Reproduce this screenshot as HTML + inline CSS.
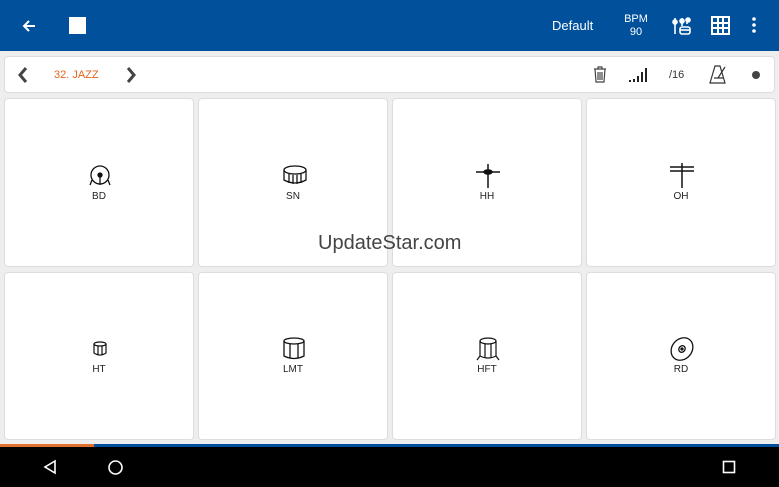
<!DOCTYPE html>
<html><head><meta charset="utf-8"><style>
*{margin:0;padding:0;box-sizing:border-box}
body{width:779px;height:487px;overflow:hidden;background:#eeeeee;font-family:"Liberation Sans",sans-serif;position:relative}
.top{position:absolute;left:0;top:0;width:779px;height:51px;background:#00509c}
.abs{position:absolute}
.bar{position:absolute;left:4px;top:56px;width:771px;height:37px;background:#fff;border:1px solid #ddd;border-radius:4px}
.cell{position:absolute;width:190px;background:#fff;border:1px solid #ddd;border-radius:4px}
.lbl{position:absolute;width:100%;text-align:center;font-size:10px;color:#222}
.cell svg{position:absolute;left:83px}
</style></head><body>
<div class="top">
<svg class="abs" style="left:20px;top:17px" width="18" height="18" viewBox="0 0 18 18"><path d="M15 9H4M9 4L4 9l5 5" stroke="#fff" stroke-width="2" fill="none"/></svg>
<div class="abs" style="left:69px;top:17px;width:17px;height:17px;background:#fff"></div>
<div class="abs" style="left:552px;top:18px;color:#fff;font-size:13px">Default</div>
<div class="abs" style="left:620px;top:13px;color:#fff;font-size:11px;text-align:center;width:32px;line-height:13px">BPM<br>90</div>
<svg class="abs" style="left:672px;top:16px" width="20" height="20" viewBox="0 0 20 20" fill="none" stroke="#fff" stroke-width="1.6"><path d="M3 2v16M15 2v6"/><circle cx="3" cy="6" r="2" fill="#fff"/><circle cx="10" cy="5" r="2" fill="#fff"/><circle cx="16" cy="4" r="2" fill="#fff"/><path d="M10 2v8"/><rect x="8" y="11" width="10" height="7" rx="2"/><path d="M8 14h10"/></svg>
<svg class="abs" style="left:711px;top:16px" width="19" height="19" viewBox="0 0 19 19" fill="none" stroke="#fff" stroke-width="2"><rect x="1" y="1" width="17" height="17"/><path d="M7 1v17M12 1v17M1 7h17M1 12h17"/></svg>
<svg class="abs" style="left:751px;top:16px" width="6" height="18"><circle cx="3" cy="3" r="1.8" fill="#fff"/><circle cx="3" cy="9" r="1.8" fill="#fff"/><circle cx="3" cy="15" r="1.8" fill="#fff"/></svg>
</div>
<div class="bar">
<svg class="abs" style="left:12px;top:10px" width="12" height="16"><path d="M9 1L3 8l6 7" stroke="#444" stroke-width="3" fill="none"/></svg>
<div class="abs" style="left:49px;top:12px;color:#e0651e;font-size:11px">32. JAZZ</div>
<svg class="abs" style="left:120px;top:10px" width="12" height="16"><path d="M3 1l6 7-6 7" stroke="#444" stroke-width="3" fill="none"/></svg>
<svg class="abs" style="left:588px;top:9px" width="14" height="18" fill="none" stroke="#444" stroke-width="1.2"><path d="M1 3h12M5 3V1h4v2M2 3l1 13h8l1-13M5 6v8M7 6v8M9 6v8"/></svg>
<svg class="abs" style="left:624px;top:10px" width="22" height="16" fill="#222"><rect x="0" y="13" width="2" height="2"/><rect x="4" y="12" width="2" height="3"/><rect x="8" y="9" width="2" height="6"/><rect x="12" y="5" width="2" height="10"/><rect x="16" y="1" width="2" height="14"/></svg>
<div class="abs" style="left:664px;top:12px;font-size:11px;color:#333">/16</div>
<svg class="abs" style="left:704px;top:8px" width="18" height="20" fill="none" stroke="#333" stroke-width="1.2"><path d="M6 1h5l5 17H1z M5 13h9M9 13l7-11"/></svg>
<svg class="abs" style="left:746px;top:13px" width="10" height="10"><circle cx="5" cy="5" r="4" fill="#444"/></svg>
</div>

<div class="cell" style="left:4px;top:98px;height:169px">
<svg style="top:66px;left:83px" width="24" height="24" fill="none" stroke="#111" stroke-width="1.3"><circle cx="12" cy="10" r="9"/><path d="M12 10v10M4 15l-2 5M20 15l2 5"/><circle cx="12" cy="10" r="2" fill="#111"/></svg>
<div class="lbl" style="top:92px">BD</div></div>
<div class="cell" style="left:198px;top:98px;height:169px">
<svg style="top:66px" width="26" height="22" fill="none" stroke="#111" stroke-width="1.3"><ellipse cx="13" cy="5" rx="11" ry="4"/><path d="M2 5v10q11 6 22 0V5M7 9v9M11 10v9M15 10v9M19 9v9"/></svg>
<div class="lbl" style="top:92px">SN</div></div>
<div class="cell" style="left:392px;top:98px;height:169px">
<svg style="top:62px;left:81px" width="28" height="28" fill="none" stroke="#111" stroke-width="1.5"><path d="M2 11h24M14 3v24"/><ellipse cx="14" cy="11" rx="4" ry="2" fill="#111"/></svg>
<div class="lbl" style="top:92px">HH</div></div>
<div class="cell" style="left:586px;top:98px;height:169px">
<svg style="top:62px;left:81px" width="28" height="28" fill="none" stroke="#111" stroke-width="1.5"><path d="M2 6h24M2 10h24M14 2v25"/></svg>
<div class="lbl" style="top:92px">OH</div></div>

<div class="cell" style="left:4px;top:272px;height:168px">
<svg style="top:68px;left:87px" width="16" height="16" fill="none" stroke="#111" stroke-width="1.2"><ellipse cx="8" cy="3" rx="6" ry="2"/><path d="M2 3v9q6 4 12 0V3M6 5v9M10 5v9"/></svg>
<div class="lbl" style="top:91px">HT</div></div>
<div class="cell" style="left:198px;top:272px;height:168px">
<svg style="top:64px;left:83px" width="24" height="24" fill="none" stroke="#111" stroke-width="1.3"><ellipse cx="12" cy="4" rx="10" ry="3"/><path d="M2 4v15q10 5 20 0V4M8 7v14M16 7v14"/></svg>
<div class="lbl" style="top:91px">LMT</div></div>
<div class="cell" style="left:392px;top:272px;height:168px">
<svg style="top:64px;left:82px" width="26" height="26" fill="none" stroke="#111" stroke-width="1.2"><ellipse cx="13" cy="4" rx="8" ry="3"/><path d="M5 4v15q8 4 16 0V4M10 7v14M16 7v14M5 19l-3 4M21 19l3 4"/></svg>
<div class="lbl" style="top:91px">HFT</div></div>
<div class="cell" style="left:586px;top:272px;height:168px">
<svg style="top:63px;left:81px" width="28" height="26" fill="none" stroke="#111" stroke-width="1.3"><ellipse cx="14" cy="13" rx="12" ry="10" transform="rotate(-50 14 13)"/><ellipse cx="14" cy="13" rx="3.5" ry="3" transform="rotate(-50 14 13)"/><circle cx="14" cy="13" r="1" fill="#111"/></svg>
<div class="lbl" style="top:91px">RD</div></div>

<div class="abs" style="left:318px;top:232px;font-size:20px;color:#444">UpdateStar.com</div>

<div class="abs" style="left:0;top:444px;width:779px;height:3px;background:#00509c"></div>
<div class="abs" style="left:0;top:444px;width:94px;height:3px;background:#e07030"></div>
<div class="abs" style="left:0;top:447px;width:779px;height:40px;background:#000"></div>
<svg class="abs" style="left:42px;top:459px" width="16" height="16"><path d="M13 2L3 8l10 6z" stroke="#fff" stroke-width="1.6" fill="none"/></svg>
<svg class="abs" style="left:107px;top:459px" width="17" height="17"><circle cx="8.5" cy="8.5" r="6.5" stroke="#fff" stroke-width="1.6" fill="none"/></svg>
<svg class="abs" style="left:722px;top:460px" width="14" height="14"><rect x="1.5" y="1.5" width="11" height="11" stroke="#fff" stroke-width="1.6" fill="none"/></svg>
</body></html>
